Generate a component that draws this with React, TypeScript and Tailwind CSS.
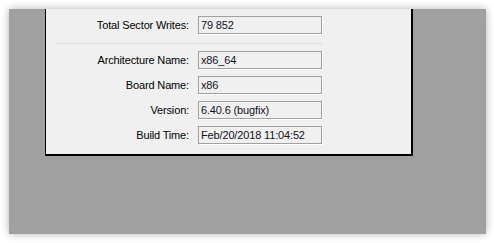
import React from 'react';

const rows = [
  { label: 'Architecture Name:', value: 'x86_64' },
  { label: 'Board Name:', value: 'x86' },
  { label: 'Version:', value: '6.40.6 (bugfix)' },
  { label: 'Build Time:', value: 'Feb/20/2018 11:04:52' },
];

function Field({ label, value }: { label: string; value: string }) {
  return (
    <div className="flex items-center h-[18px]">
      <div className="w-[144px] text-right pr-[1px] text-black">{label}</div>
      <div className="ml-[8px] w-[124px] h-[18px] border border-[#a0a0a0] bg-[#f0f0f0] shadow-[1px_1px_0_#ffffff] flex items-center pl-[2px] text-[#111122]">
        {value}
      </div>
    </div>
  );
}

export default function App() {
  return (
    <div className="w-[494px] h-[243px] bg-white pt-[9px] pl-[9px]">
      <div
        className="w-[477px] h-[225px] bg-[#a0a0a0] shadow-[0_0_8px_rgba(0,0,0,0.3)] pl-[36px]"
        style={{ fontFamily: '"Liberation Sans", Arial, sans-serif' }}
      >
        <div className="w-[368px] bg-[#f0f0f0] border-l border-r-2 border-b-2 border-black pt-[7px] pb-[10px] text-[11px] tracking-[-0.15px]">
          <Field label="Total Sector Writes:" value="79 852" />
          <div className="ml-[9px] mt-[9px] mb-[7px] w-[267px] h-px bg-[#dcdcdc]" />
          <div className="flex flex-col gap-[7px]">
            {rows.map((r) => (
              <Field key={r.label} label={r.label} value={r.value} />
            ))}
          </div>
        </div>
      </div>
    </div>
  );
}
